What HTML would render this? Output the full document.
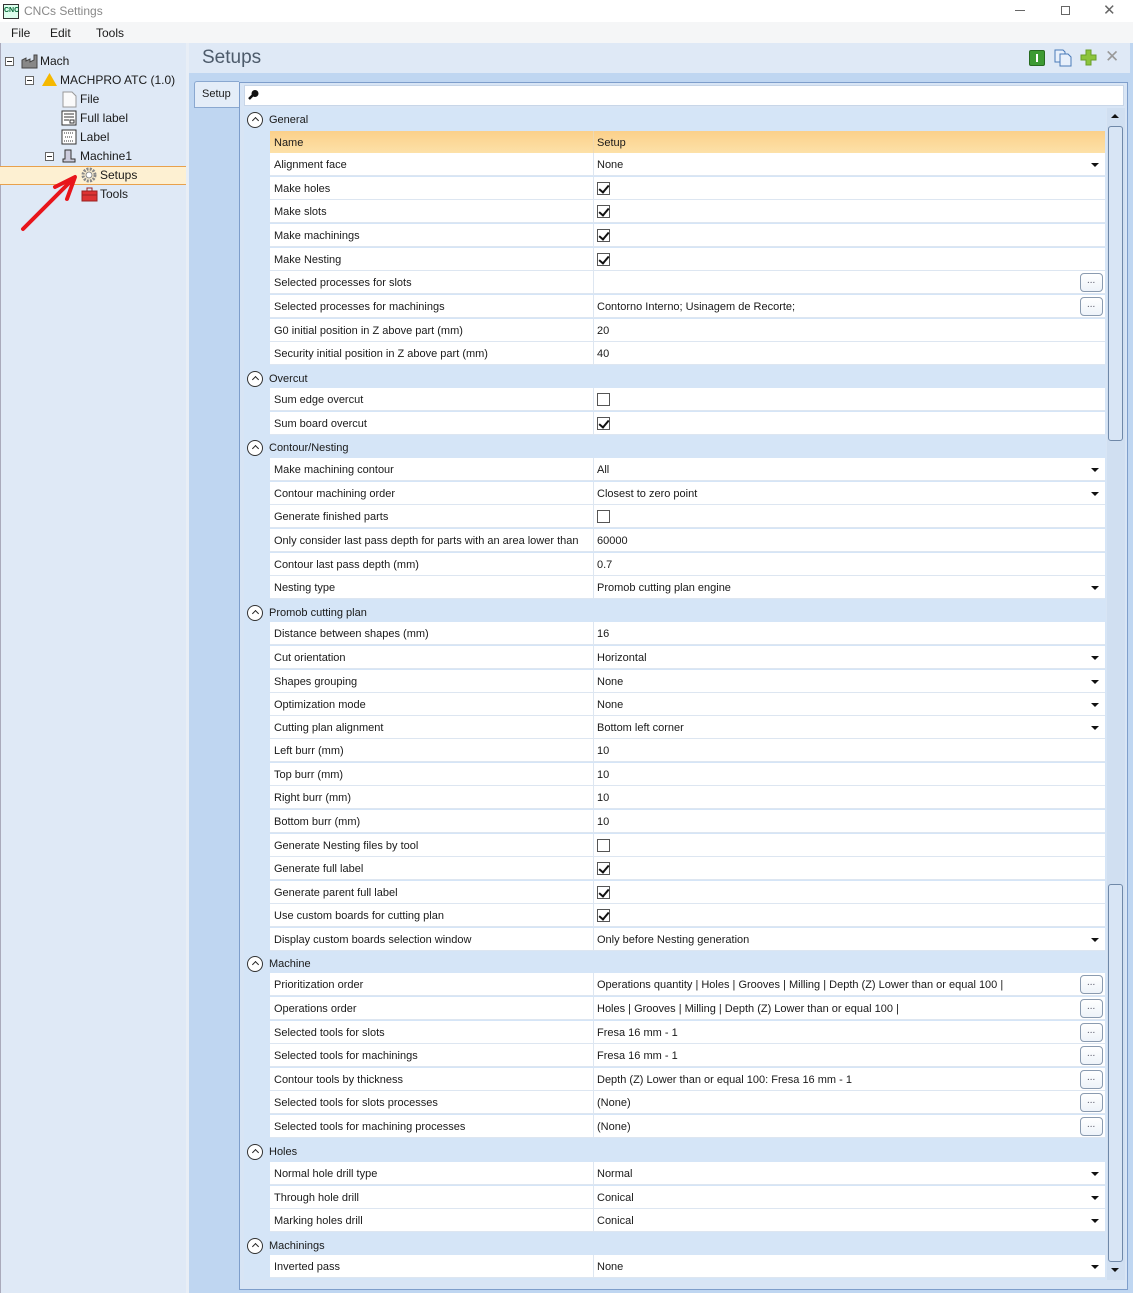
<!DOCTYPE html>
<html><head><meta charset="utf-8">
<style>
*{box-sizing:border-box;margin:0;padding:0}
body{width:1133px;height:1293px;position:relative;overflow:hidden;background:#fff;font-family:"Liberation Sans",sans-serif;font-size:11px;color:#1a1a1a}
.a{position:absolute}
.r{position:absolute;left:270px;width:835px;height:23px;background:#fff;border-bottom:1px solid #dde6f1}
.r::after{content:"";position:absolute;left:323px;top:0;width:1px;height:23px;background:#dde6f1}
.r .n{position:absolute;left:4px;top:6px;white-space:nowrap}
.r .v{position:absolute;left:327px;top:6px;white-space:nowrap}
.dd::before{content:"";position:absolute;right:6px;top:10px;border-left:4px solid transparent;border-right:4px solid transparent;border-top:4px solid #111}
.cb{position:absolute;left:327px;top:5px;width:13px;height:13px;border:1px solid #555;background:#fff}
.cb.c::after{content:"";position:absolute;left:3px;top:0px;width:4px;height:8px;border-right:2px solid #111;border-bottom:2px solid #111;transform:rotate(40deg)}
.bt{position:absolute;right:2px;top:2px;width:23px;height:19px;border:1px solid #8a9bb0;border-radius:4px;background:linear-gradient(#fff,#eef3f9);font-size:10px;text-align:center;line-height:14px;color:#556}
.g{position:absolute;left:244px;width:861px;height:20px;background:#d5e5f7;border-radius:2px}
.g .ci{position:absolute;left:3px;top:2px;width:16px;height:16px;border:1.3px solid #333;border-radius:50%;background:#fff}
.g .ci::after{content:"";position:absolute;left:4.5px;top:5px;width:4px;height:4px;border-left:1.6px solid #222;border-top:1.6px solid #222;transform:rotate(45deg)}
.g span{position:absolute;left:25px;top:4px}
.tr{position:absolute;font-size:12px;white-space:nowrap}
.mb{position:absolute;width:9px;height:9px;border:1px solid #666;background:#fff}
.mb::after{content:"";position:absolute;left:1px;top:3px;width:5px;height:1px;background:#333}
</style></head><body>
<div class="a" style="left:0;top:0;width:1133px;height:22px;background:#fff"></div>
<div class="a" style="left:3px;top:4px;width:16px;height:15px;border:1px solid #333;background:#dfe;font-size:7px;font-weight:bold;color:#063;line-height:12px;text-align:center">CNC</div>
<div class="a" style="left:24px;top:4px;font-size:12px;color:#888">CNCs Settings</div>
<div class="a" style="left:1015px;top:10px;width:10px;height:1px;background:#666"></div>
<div class="a" style="left:1061px;top:6px;width:9px;height:9px;border:1px solid #666"></div>
<div class="a" style="left:1103px;top:1px;font-size:15px;color:#666">✕</div>
<div class="a" style="left:0;top:22px;width:1133px;height:21px;background:#f5f6f7"></div>
<div class="a" style="left:11px;top:26px;font-size:12px">File</div>
<div class="a" style="left:50px;top:26px;font-size:12px">Edit</div>
<div class="a" style="left:96px;top:26px;font-size:12px">Tools</div>
<div class="a" style="left:0;top:43px;width:187px;height:1250px;background:#dfe9f6;border-left:1px solid #aab"></div>
<div class="a" style="left:186px;top:43px;width:3px;height:1250px;background:#e8eef6"></div>
<div class="mb" style="left:5px;top:57px"></div>
<svg class="a" style="left:21px;top:53px" width="18" height="16"><path d="M1 15V7l4-2v3l4-2v3l4-2V2h3v13z" fill="#888" stroke="#444" stroke-width="1"/></svg>
<div class="tr" style="left:40px;top:54px">Mach</div>
<div class="mb" style="left:25px;top:76px"></div>
<svg class="a" style="left:41px;top:72px" width="17" height="15"><path d="M8.5 1L16 14H1z" fill="#f5b800"/></svg>
<div class="tr" style="left:60px;top:73px">MACHPRO ATC (1.0)</div>
<svg class="a" style="left:62px;top:91px" width="15" height="17"><path d="M1 1h9l4 4v11H1z" fill="#fafafa" stroke="#999"/></svg>
<div class="tr" style="left:80px;top:92px">File</div>
<svg class="a" style="left:61px;top:110px" width="16" height="16"><rect x="1" y="1" width="14" height="14" fill="#fff" stroke="#333"/><path d="M3 4h10M3 7h10M3 10h5M9 10h4v3H9z" stroke="#333" fill="none"/></svg>
<div class="tr" style="left:80px;top:111px">Full label</div>
<svg class="a" style="left:61px;top:129px" width="16" height="16"><rect x="1" y="1" width="14" height="14" fill="#fff" stroke="#333"/><path d="M3 4h10M3 12h10M4 8h8" stroke="#333" stroke-dasharray="1 1" fill="none"/></svg>
<div class="tr" style="left:80px;top:130px">Label</div>
<div class="mb" style="left:45px;top:152px"></div>
<svg class="a" style="left:61px;top:148px" width="16" height="16"><path d="M4 2h6v9h4v3H2v-3h2z" fill="#ccd" stroke="#333"/></svg>
<div class="tr" style="left:80px;top:149px">Machine1</div>
<div class="a" style="left:0;top:166px;width:186px;height:19px;background:#fdf0d2;border-top:1px solid #e8a14c;border-bottom:1px solid #e8a14c"></div>
<svg class="a" style="left:81px;top:167px" width="16" height="16"><circle cx="8" cy="8" r="6" fill="none" stroke="#888" stroke-width="3" stroke-dasharray="2 1.2"/><circle cx="8" cy="8" r="3" fill="#fff" stroke="#888"/></svg>
<div class="tr" style="left:100px;top:168px">Setups</div>
<svg class="a" style="left:81px;top:187px" width="17" height="15"><rect x="1" y="4" width="15" height="10" fill="#d33" stroke="#922"/><rect x="6" y="1" width="5" height="3" fill="none" stroke="#922"/><path d="M1 8h15" stroke="#922"/></svg>
<div class="tr" style="left:100px;top:187px">Tools</div>
<svg class="a" style="left:15px;top:165px" width="70" height="75"><path d="M8 64L56 16" stroke="#e8151b" stroke-width="4" stroke-linecap="round" fill="none"/><path d="M40 22L60 12L52 34" stroke="#e8151b" stroke-width="4" stroke-linecap="round" stroke-linejoin="round" fill="none"/></svg>
<div class="a" style="left:189px;top:43px;width:944px;height:1250px;background:#bfd6f1"></div>
<div class="a" style="left:189px;top:43px;width:941px;height:30px;background:#dfe9f6"></div>
<div class="a" style="left:202px;top:47px;font-size:19px;color:#4d5b6b">Setups</div>
<div class="a" style="left:1029px;top:50px;width:16px;height:16px;background:#3d9a33;border:1px solid #276b20;border-radius:2px"><div style="position:absolute;left:6px;top:3px;width:2px;height:8px;background:#fff"></div></div>
<svg class="a" style="left:1054px;top:49px" width="18" height="18"><path d="M1 1h8l2 2v10H1z" fill="#e8f0fb" stroke="#4a7ab8"/><path d="M6 5h8l3 3v9H6z" fill="#e8f0fb" stroke="#4a7ab8"/></svg>
<svg class="a" style="left:1080px;top:49px" width="18" height="18"><path d="M6 1h5v5h5v5h-5v5H6v-5H1V6h5z" fill="#8cc43c" stroke="#6a9e2a"/></svg>
<div class="a" style="left:1105px;top:47px;font-size:17px;color:#999">✕</div>
<div class="a" style="left:194px;top:81px;width:45px;height:27px;background:#e4edf8;border:1px solid #8aa8d0;border-right:none;border-radius:3px 0 0 0"></div>
<div class="a" style="left:202px;top:88px">Setup</div>
<div class="a" style="left:239px;top:82px;width:889px;height:1208px;background:#d8e5f5;border:1px solid #7e9ecb"></div>
<div class="a" style="left:244px;top:85px;width:880px;height:21px;background:#fff;border:1px solid #c8d6e8"></div>
<svg class="a" style="left:248px;top:89px" width="12" height="12"><circle cx="7" cy="4.5" r="3.5" fill="#111"/><path d="M5 6L1 10" stroke="#111" stroke-width="2.5"/></svg>
<div class="a" style="left:244px;top:108px;width:862px;height:1172px;background:#d5e5f7"></div>
<div class="a" style="left:1107px;top:108px;width:18px;height:1172px;background:#d0dff1"></div>
<div class="a" style="left:1111px;top:114px;border-left:4px solid transparent;border-right:4px solid transparent;border-bottom:4px solid #111"></div>
<div class="a" style="left:1111px;top:1268px;border-left:4px solid transparent;border-right:4px solid transparent;border-top:4px solid #111"></div>
<div class="a" style="left:1108px;top:126px;width:15px;height:315px;border:1px solid #6f88a8;border-radius:3px;background:#d8e5f5"></div>
<div class="a" style="left:1108px;top:884px;width:15px;height:378px;border:1px solid #6f88a8;border-radius:3px;background:#d8e5f5"></div>

<div class="g" style="top:110px"><div class="ci"></div><span>General</span></div>
<div class="a" style="left:270px;top:131px;width:835px;height:22px;background:linear-gradient(#fbd08a,#fde1a8)"><span class="a" style="left:4px;top:6px">Name</span><span class="a" style="left:327px;top:6px">Setup</span><div class="a" style="left:323px;top:0;width:1px;height:22px;background:#f0d9b0"></div></div>
<div class="r dd" style="top:153px"><span class="n">Alignment face</span><span class="v">None</span></div>
<div class="r" style="top:177px"><span class="n">Make holes</span><i class="cb c"></i></div>
<div class="r" style="top:200px"><span class="n">Make slots</span><i class="cb c"></i></div>
<div class="r" style="top:224px"><span class="n">Make machinings</span><i class="cb c"></i></div>
<div class="r" style="top:248px"><span class="n">Make Nesting</span><i class="cb c"></i></div>
<div class="r" style="top:271px"><span class="n">Selected processes for slots</span><i class="bt">...</i></div>
<div class="r" style="top:295px"><span class="n">Selected processes for machinings</span><span class="v">Contorno Interno; Usinagem de Recorte;</span><i class="bt">...</i></div>
<div class="r" style="top:319px"><span class="n">G0 initial position in Z above part (mm)</span><span class="v">20</span></div>
<div class="r" style="top:342px"><span class="n">Security initial position in Z above part (mm)</span><span class="v">40</span></div>
<div class="g" style="top:369px"><div class="ci"></div><span>Overcut</span></div>
<div class="r" style="top:388px"><span class="n">Sum edge overcut</span><i class="cb"></i></div>
<div class="r" style="top:412px"><span class="n">Sum board overcut</span><i class="cb c"></i></div>
<div class="g" style="top:438px"><div class="ci"></div><span>Contour/Nesting</span></div>
<div class="r dd" style="top:458px"><span class="n">Make machining contour</span><span class="v">All</span></div>
<div class="r dd" style="top:482px"><span class="n">Contour machining order</span><span class="v">Closest to zero point</span></div>
<div class="r" style="top:505px"><span class="n">Generate finished parts</span><i class="cb"></i></div>
<div class="r" style="top:529px"><span class="n">Only consider last pass depth for parts with an area lower than</span><span class="v">60000</span></div>
<div class="r" style="top:553px"><span class="n">Contour last pass depth (mm)</span><span class="v">0.7</span></div>
<div class="r dd" style="top:576px"><span class="n">Nesting type</span><span class="v">Promob cutting plan engine</span></div>
<div class="g" style="top:603px"><div class="ci"></div><span>Promob cutting plan</span></div>
<div class="r" style="top:622px"><span class="n">Distance between shapes (mm)</span><span class="v">16</span></div>
<div class="r dd" style="top:646px"><span class="n">Cut orientation</span><span class="v">Horizontal</span></div>
<div class="r dd" style="top:670px"><span class="n">Shapes grouping</span><span class="v">None</span></div>
<div class="r dd" style="top:693px"><span class="n">Optimization mode</span><span class="v">None</span></div>
<div class="r dd" style="top:716px"><span class="n">Cutting plan alignment</span><span class="v">Bottom left corner</span></div>
<div class="r" style="top:739px"><span class="n">Left burr (mm)</span><span class="v">10</span></div>
<div class="r" style="top:763px"><span class="n">Top burr (mm)</span><span class="v">10</span></div>
<div class="r" style="top:786px"><span class="n">Right burr (mm)</span><span class="v">10</span></div>
<div class="r" style="top:810px"><span class="n">Bottom burr (mm)</span><span class="v">10</span></div>
<div class="r" style="top:834px"><span class="n">Generate Nesting files by tool</span><i class="cb"></i></div>
<div class="r" style="top:857px"><span class="n">Generate full label</span><i class="cb c"></i></div>
<div class="r" style="top:881px"><span class="n">Generate parent full label</span><i class="cb c"></i></div>
<div class="r" style="top:904px"><span class="n">Use custom boards for cutting plan</span><i class="cb c"></i></div>
<div class="r dd" style="top:928px"><span class="n">Display custom boards selection window</span><span class="v">Only before Nesting generation</span></div>
<div class="g" style="top:954px"><div class="ci"></div><span>Machine</span></div>
<div class="r" style="top:973px"><span class="n">Prioritization order</span><span class="v">Operations quantity | Holes | Grooves | Milling | Depth (Z) Lower than or equal 100 |</span><i class="bt">...</i></div>
<div class="r" style="top:997px"><span class="n">Operations order</span><span class="v">Holes | Grooves | Milling | Depth (Z) Lower than or equal 100 |</span><i class="bt">...</i></div>
<div class="r" style="top:1021px"><span class="n">Selected tools for slots</span><span class="v">Fresa 16 mm - 1</span><i class="bt">...</i></div>
<div class="r" style="top:1044px"><span class="n">Selected tools for machinings</span><span class="v">Fresa 16 mm - 1</span><i class="bt">...</i></div>
<div class="r" style="top:1068px"><span class="n">Contour tools by thickness</span><span class="v">Depth (Z) Lower than or equal 100: Fresa 16 mm - 1</span><i class="bt">...</i></div>
<div class="r" style="top:1091px"><span class="n">Selected tools for slots processes</span><span class="v">(None)</span><i class="bt">...</i></div>
<div class="r" style="top:1115px"><span class="n">Selected tools for machining processes</span><span class="v">(None)</span><i class="bt">...</i></div>
<div class="g" style="top:1142px"><div class="ci"></div><span>Holes</span></div>
<div class="r dd" style="top:1162px"><span class="n">Normal hole drill type</span><span class="v">Normal</span></div>
<div class="r dd" style="top:1186px"><span class="n">Through hole drill</span><span class="v">Conical</span></div>
<div class="r dd" style="top:1209px"><span class="n">Marking holes drill</span><span class="v">Conical</span></div>
<div class="g" style="top:1236px"><div class="ci"></div><span>Machinings</span></div>
<div class="r dd" style="top:1255px"><span class="n">Inverted pass</span><span class="v">None</span></div>
</body></html>
